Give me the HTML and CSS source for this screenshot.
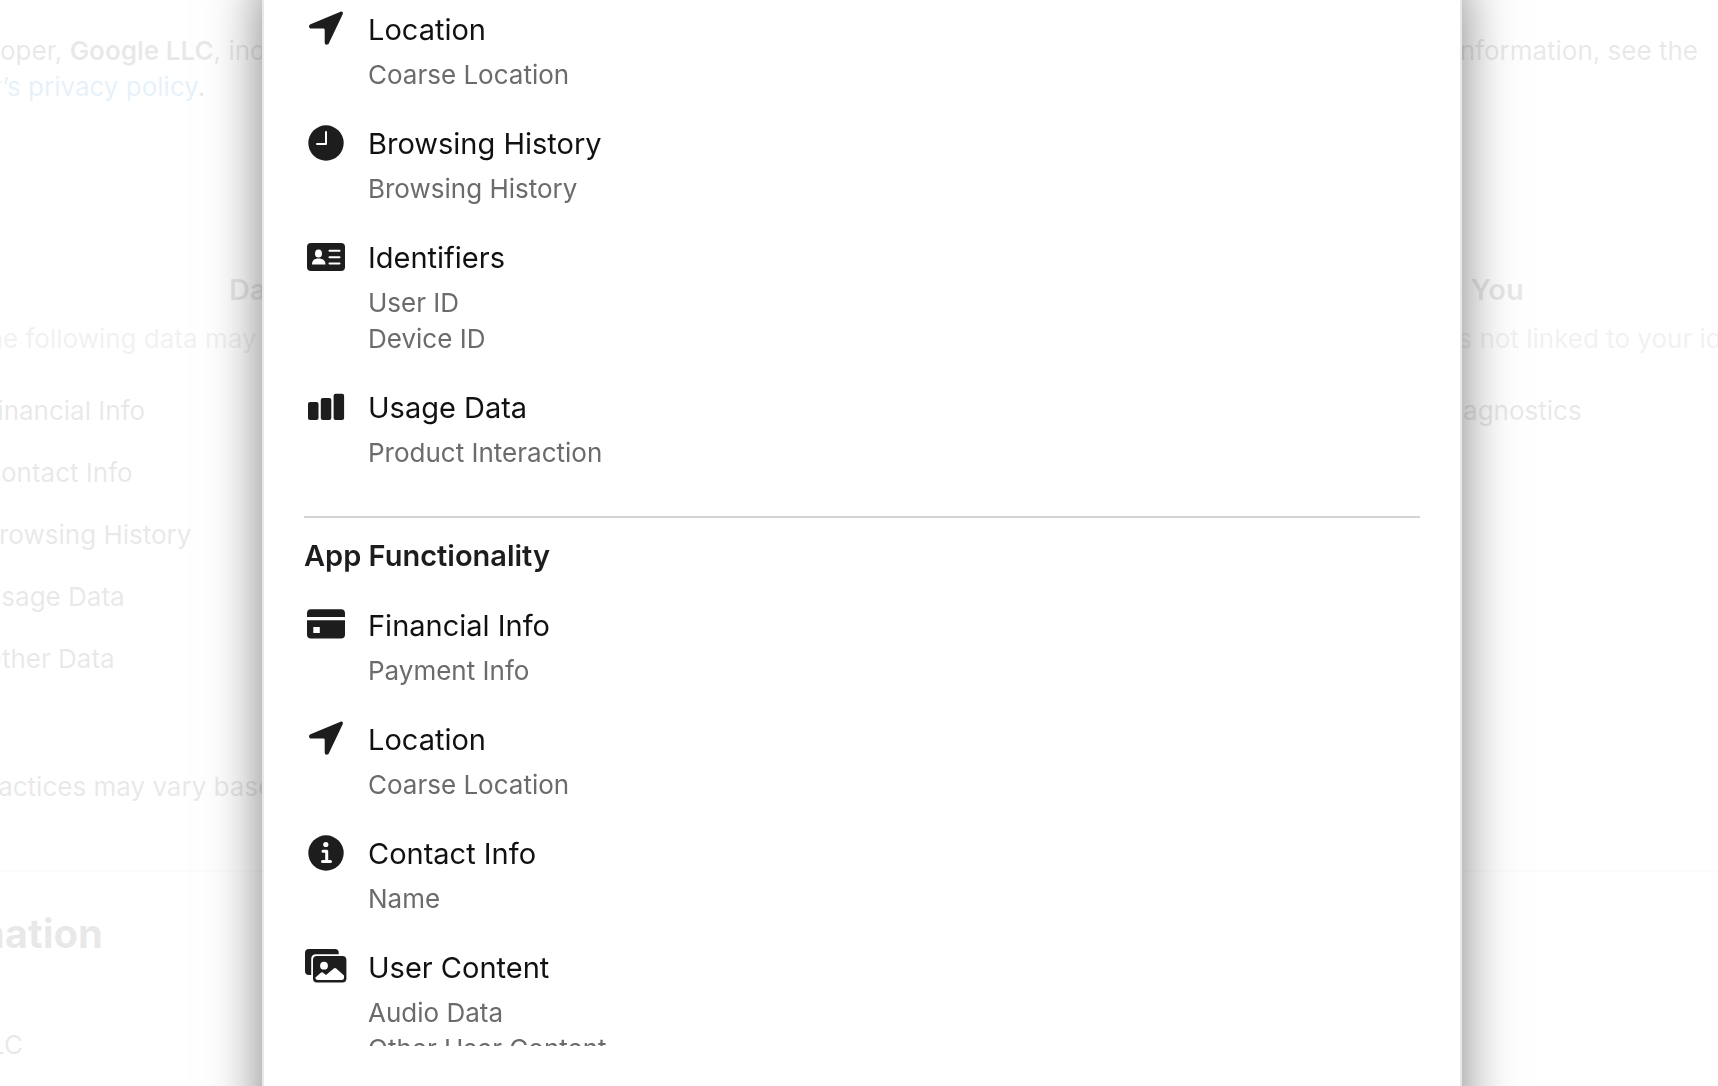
FILE: index.html
```html
<!DOCTYPE html>
<html lang="en">
<head>
  <meta charset="UTF-8" />
  <meta name="viewport" content="width=device-width, initial-scale=1" />
  <title>App Privacy</title>
  <link rel="stylesheet" href="styles.css">
</head>
<body>
  <main class="page">
    <div class="intro">
      <p>oper, <strong>Google LLC</strong>, indicated that the app’s<br><a href="#policy">r’s privacy policy</a>.</p>
      <p>For more information, see the</p>
    </div>

    <div class="cards">
      <section class="card">
        <h2>Data Linked to You</h2>
        <p class="card-text">The following data may be collected and linked to your identity:</p>
        <ul>
          <li>Financial Info</li>
          <li>Contact Info</li>
          <li>Browsing History</li>
          <li>Usage Data</li>
          <li>Other Data</li>
        </ul>
      </section>
      <section class="card">
        <h2>Data Not Linked to You</h2>
        <p class="card-text">The following data may be collected but it is not linked to your identity:</p>
        <ul class="single">
          <li>Diagnostics</li>
        </ul>
      </section>
    </div>

    <p class="note">Privacy practices may vary based on the features you use</p>

    <section class="information">
      <h2>Information</h2>
      <p>Google LLC</p>
    </section>
  </main>

  <div class="overlay"></div>

  <div class="modal" role="dialog" aria-label="App Privacy">
    <div class="modal-content">
      <section class="purpose">
        <div class="item">
          <svg class="icon" viewBox="0 0 44 40"><path d="M36.500 1.700 6.500 14.300C4.300 15.300 4.700 18.600 7.200 18.600H19.400Q20.700 18.600 20.700 20V32.400C20.700 35.200 24 35.300 24.900 33.200L38.700 4.200C39.500 2.300 38.200 1 36.500 1.700Z"/></svg>
          <div>
            <h3>Location</h3>
            <ul><li>Coarse Location</li></ul>
          </div>
        </div>
        <div class="item">
          <svg class="icon" viewBox="0 0 44 40"><circle cx="22" cy="19" r="17.700"/><path class="line" d="M22 8V20H13"/></svg>
          <div>
            <h3>Browsing History</h3>
            <ul><li>Browsing History</li></ul>
          </div>
        </div>
        <div class="item">
          <svg class="icon" viewBox="0 0 44 40"><rect x="3" y="5" width="38" height="28" rx="4"/><ellipse class="cut" cx="14.500" cy="15.500" rx="3.500" ry="4"/><path class="cut" d="M8 26.500C8 22.500 10.500 20.500 14.500 20.500S21.500 22.500 21.500 26.500Z"/><path class="line" d="M25.500 12.800H35.500M25.500 19.300H35.500M25.500 25.500H35.500"/></svg>
          <div>
            <h3>Identifiers</h3>
            <ul><li>User ID</li><li>Device ID</li></ul>
          </div>
        </div>
        <div class="item">
          <svg class="icon" viewBox="0 0 44 40"><rect x="4" y="14" width="10.500" height="18" rx="2"/><rect x="16.800" y="10" width="10.500" height="22" rx="2"/><rect x="29.600" y="5.700" width="10.500" height="26.300" rx="2"/></svg>
          <div>
            <h3>Usage Data</h3>
            <ul><li>Product Interaction</li></ul>
          </div>
        </div>
      </section>

      <section class="purpose">
        <h2>App Functionality</h2>
        <div class="item">
          <svg class="icon" viewBox="0 0 44 40"><rect x="3" y="3.300" width="38" height="29.200" rx="4"/><path class="cut" d="M3 11H41V14.300H3ZM9.300 21H15.800V27H9.300Z"/></svg>
          <div>
            <h3>Financial Info</h3>
            <ul><li>Payment Info</li></ul>
          </div>
        </div>
        <div class="item">
          <svg class="icon" viewBox="0 0 44 40"><path d="M36.500 1.700 6.500 14.300C4.300 15.300 4.700 18.600 7.200 18.600H19.400Q20.700 18.600 20.700 20V32.400C20.700 35.200 24 35.300 24.900 33.200L38.700 4.200C39.500 2.300 38.200 1 36.500 1.700Z"/></svg>
          <div>
            <h3>Location</h3>
            <ul><li>Coarse Location</li></ul>
          </div>
        </div>
        <div class="item">
          <svg class="icon" viewBox="0 0 44 40"><circle cx="22" cy="19" r="17.700"/><circle class="cut" cx="21.800" cy="10.500" r="2.600"/><path class="line info" d="M19 17.200H22.700V27.600M18.500 27.600H26.500"/></svg>
          <div>
            <h3>Contact Info</h3>
            <ul><li>Name</li></ul>
          </div>
        </div>
        <div class="item">
          <svg class="icon" viewBox="0 0 44 40"><path d="M5 1H31Q34.700 1 34.700 4.500V6.200H12Q7.200 6.200 7.200 11V27H5Q1 27 1 23V5Q1 1 5 1Z"/><rect x="9" y="8" width="33.400" height="26.400" rx="4"/><circle class="cut" cx="20" cy="17.700" r="3.900"/><path class="cut" d="M11.400 29.500 16.500 25Q18 23.700 19.500 25L22 27 29.500 20.700Q31 19.500 32.500 20.700L40 27.500V29.500Q40 32 37.500 32H14Q11.400 32 11.400 29.500Z"/></svg>
          <div>
            <h3>User Content</h3>
            <ul><li>Audio Data</li><li>Other User Content</li></ul>
          </div>
        </div>
      </section>
    </div>
  </div>
</body>
</html>
```
FILE: styles.css
```css
* {
  box-sizing: border-box;
}
body {
  margin: 0;
  overflow: hidden;
  background: #fff;
  color: #1d1d1f;
  font-family: Inter, "Noto Sans", sans-serif;
  font-size: 26px;
  line-height: 36px;
}
h2, h3, p, ul {
  margin: 0;
  padding: 0;
}
ul {
  list-style: none;
}
a {
  color: #0070c9;
  text-decoration: none;
}
strong {
  font-weight: 600;
}

/* page behind the dialog */
.page {
  height: 100vh;
  overflow: hidden;
  white-space: nowrap;
}
.intro {
  display: flex;
  justify-content: space-between;
  padding: 33px 20px 0 0;
}
.intro a {
  margin-left: -8px;
}
.cards {
  display: grid;
  grid-template-columns: 1fr 1fr;
  gap: 20px;
  margin: 165px -140px 0 -134px;
}
.card {
  text-align: center;
}
.card h2 {
  font-size: 29px;
  line-height: 40px;
  font-weight: 600;
}
.card-text {
  margin-top: 11px;
  color: #6e6e73;
}
.card ul {
  display: grid;
  gap: 26px;
  padding-left: 116px;
  margin-top: 36px;
  text-align: left;
}
.card .single {
  padding-left: 566px;
}
.note {
  margin: 92px 0 0 -126px;
}
.information {
  margin-top: 65px;
  padding-top: 36px;
  border-top: 2px solid #d2d2d7;
}
.information h2 {
  font-size: 40px;
  line-height: 52px;
  font-weight: 700;
  margin-left: -124px;
}
.information p {
  margin: 67px 0 0 -120px;
}
.overlay {
  position: fixed;
  inset: 0;
  background: rgba(255, 255, 255, 0.9);
}

/* dialog, taller than the window so only its sides show */
.modal {
  position: fixed;
  top: -20px;
  bottom: -60px;
  left: calc(50% + 3px);
  width: 1200px;
  max-width: 100%;
  margin-left: -600px;
  padding: 20px 40px 100px;
  background: #fff;
  background-clip: padding-box;
  border: 2px solid #e8e8e8;
  border-width: 0 2px;
  box-shadow: 0 0 50px rgba(0, 0, 0, 0.5);
}
.modal-content {
  height: 100%;
  padding-top: 10px;
  overflow: hidden;
}
.purpose + .purpose {
  margin-top: 45px;
  padding-top: 18px;
  border-top: 2px solid #d4d4d4;
}
.purpose h2 {
  margin-bottom: 30px;
  font-size: 29px;
  line-height: 40px;
  font-weight: 600;
}
.item {
  display: flex;
  gap: 20px;
}
.item + .item {
  margin-top: 31px;
}
.item h3 {
  margin-bottom: 7px;
  color: #111;
  font-size: 29px;
  line-height: 40px;
  font-weight: 400;
}
.item li {
  color: #6b6b6b;
}
.icon {
  width: 44px;
  height: 40px;
  flex: none;
  fill: #1d1d1d;
}
.icon .cut {
  fill: #fff;
}
.icon .line {
  fill: none;
  stroke: #fff;
  stroke-width: 2;
  stroke-linecap: round;
  stroke-linejoin: round;
}
.icon .info {
  stroke-width: 3;
}
```
